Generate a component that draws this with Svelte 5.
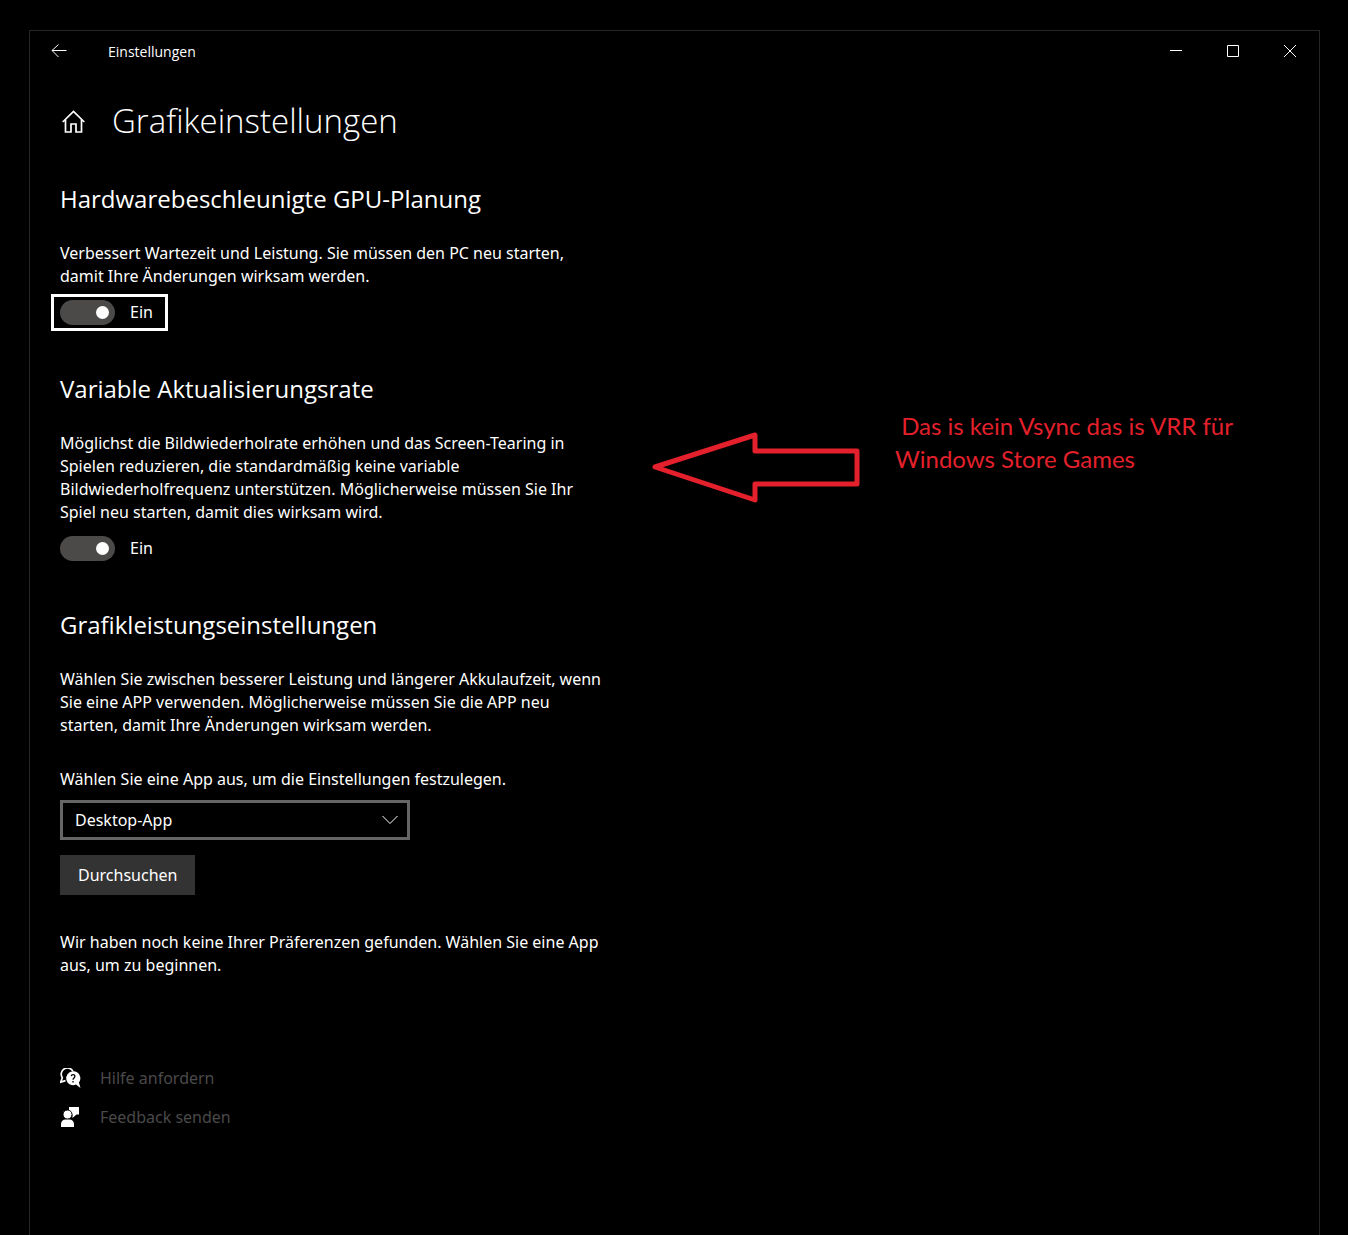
<script lang="ts">
	let gpuScheduling = $state(true);
	let variableRefresh = $state(true);
	let appType = $state('desktop');
</script>

<div class="desktop">
	<div class="window">
		<header class="titlebar">
			<button class="back" aria-label="Zurück">
				<svg viewBox="0 0 16 14" width="16" height="14">
					<path d="M15.500 6.500H1M7.500 .5L1 6.500l6.500 6.500" />
				</svg>
			</button>
			<span class="app-name">Einstellungen</span>
			<div class="controls">
				<button aria-label="Minimieren">
					<svg viewBox="0 0 14 14" width="14" height="14"><path d="M1 6.500h12" /></svg>
				</button>
				<button aria-label="Maximieren">
					<svg viewBox="0 0 14 14" width="14" height="14"><path d="M1.500 1.500h11v11h-11z" /></svg>
				</button>
				<button aria-label="Schließen">
					<svg viewBox="0 0 14 14" width="14" height="14"><path d="M1 1l12 12M13 1L1 13" /></svg>
				</button>
			</div>
		</header>

		<main>
			<div class="page-head">
				<button class="home" aria-label="Startseite">
					<svg viewBox="0 0 24 24" width="24" height="24">
						<path d="M.7 13L11.500 2.500 22.300 13M3.500 10.500V23h5.500v-8h5v8h5.500V10.500" />
					</svg>
				</button>
				<h1>Grafikeinstellungen</h1>
			</div>

			<section>
				<h2>Hardwarebeschleunigte GPU-Planung</h2>
				<p>
					Verbessert Wartezeit und Leistung. Sie müssen den PC neu starten,<br />
					damit Ihre Änderungen wirksam werden.
				</p>
				<label class="toggle focused">
					<input type="checkbox" role="switch" bind:checked={gpuScheduling} />
					<span>{gpuScheduling ? 'Ein' : 'Aus'}</span>
				</label>
			</section>

			<section>
				<h2>Variable Aktualisierungsrate</h2>
				<p>
					Möglichst die Bildwiederholrate erhöhen und das Screen-Tearing in<br />
					Spielen reduzieren, die standardmäßig keine variable<br />
					Bildwiederholfrequenz unterstützen. Möglicherweise müssen Sie Ihr<br />
					Spiel neu starten, damit dies wirksam wird.
				</p>
				<label class="toggle">
					<input type="checkbox" role="switch" bind:checked={variableRefresh} />
					<span>{variableRefresh ? 'Ein' : 'Aus'}</span>
				</label>
			</section>

			<section>
				<h2>Grafikleistungseinstellungen</h2>
				<p>
					Wählen Sie zwischen besserer Leistung und längerer Akkulaufzeit, wenn<br />
					Sie eine APP verwenden. Möglicherweise müssen Sie die APP neu<br />
					starten, damit Ihre Änderungen wirksam werden.
				</p>
				<label class="field-label" for="app-type">
					Wählen Sie eine App aus, um die Einstellungen festzulegen.
				</label>
				<div class="select">
					<select id="app-type" bind:value={appType}>
						<option value="desktop">Desktop-App</option>
						<option value="store">Microsoft Store-App</option>
					</select>
					<svg viewBox="0 0 16 10" width="16" height="10"><path d="M.5 1L8 8.500 15.500 1" /></svg>
				</div>
				<button class="browse">Durchsuchen</button>
				<p>
					Wir haben noch keine Ihrer Präferenzen gefunden. Wählen Sie eine App<br />
					aus, um zu beginnen.
				</p>
			</section>

			<nav>
				<a href="#hilfe">
					<svg viewBox="0 0 22 22" width="22" height="22">
						<path class="line" d="M13 3.500A6.200 6.200 0 1 0 2.300 9.700L.8 14l4.700-1.400" />
						<path
							class="solid"
							d="M13 3.200a7 7 0 1 0 3 13.400l4.500 3.400-1.600-5.600A7 7 0 0 0 13 3.200z"
						/>
						<path class="cut" d="M11.200 8.200c.3-2.200 3.800-2.100 3.700.1 0 1.600-1.900 1.700-1.900 3.500M13 13v1.500" />
					</svg>
					Hilfe anfordern
				</a>
				<a href="#feedback">
					<svg viewBox="0 0 22 22" width="22" height="22">
						<path class="solid" d="M9 0H19v7.500h-2.500L12.500 11V7.500H9z" />
						<circle class="head" cx="7.500" cy="7.500" r="4.500" />
						<path class="solid" d="M1 20v-3A4.500 4.500 0 0 1 5.500 12.500h4a4.500 4.500 0 0 1 4.500 4.500V20z" />
					</svg>
					Feedback senden
				</a>
			</nav>
		</main>

		<aside>
			<svg viewBox="0 0 208 72" width="208" height="72">
				<path d="M3 35L103 3v16h102v33H103v16z" />
			</svg>
			<div class="note">{' Das is kein Vsync das is VRR für\nWindows Store Games'}</div>
		</aside>
	</div>
</div>

<style>
	:global(body) {
		background: #000;
	}

	.desktop {
		box-sizing: border-box;
		min-height: 100vh;
		padding: 30px 28px 0 29px;
		display: flex;
		flex-direction: column;
		color: #fff;
		font-family: 'Noto Sans', 'Open Sans', sans-serif;
		font-size: 16px;
		line-height: 23px;
	}

	.window {
		flex: 1;
		position: relative;
		border: 1px solid #262626;
		border-bottom: none;
	}

	svg {
		display: block;
		fill: none;
		stroke: #fff;
		flex-shrink: 0;
	}

	button {
		padding: 0;
		border: none;
		background: none;
		color: inherit;
		font: inherit;
	}

	.titlebar {
		display: flex;
		align-items: center;
		height: 40px;
		padding-right: 1px;
	}

	.back,
	.controls button {
		display: flex;
		align-items: center;
		justify-content: center;
		width: 57px;
		height: 40px;
	}

	.app-name {
		margin-left: 21px;
		font-family: 'Open Sans', sans-serif;
		font-size: 14px;
	}

	.controls {
		display: flex;
		margin-left: auto;
	}

	main {
		padding: 24px 30px 40px;
	}

	.page-head {
		display: flex;
		align-items: center;
		gap: 26px;
		height: 52px;
		margin-bottom: 35px;
	}

	.home svg {
		margin-left: 2px;
		stroke-width: 1.7;
	}

	h1,
	h2 {
		font-family: 'Open Sans', sans-serif;
	}

	h1 {
		margin: 0;
		font-size: 33px;
		font-weight: 300;
		line-height: 52px;
	}

	section {
		margin-bottom: 47px;
	}

	h2 {
		margin: 0 0 26px;
		font-size: 24px;
		font-weight: 400;
		line-height: 34px;
	}

	p {
		margin: 0 0 12px;
		white-space: nowrap;
	}

	.toggle {
		display: flex;
		align-items: center;
		gap: 15px;
		width: max-content;
	}

	.toggle.focused {
		margin: -6px -9px;
		padding: 3px 12px 3px 6px;
		border: 3px solid #fff;
	}

	.toggle input {
		appearance: none;
		display: flex;
		align-items: center;
		box-sizing: border-box;
		width: 55px;
		height: 25px;
		margin: 0;
		padding: 0 6px;
		border-radius: 13px;
		background: #4c4a48;
	}

	.toggle input::before {
		content: '';
		width: 13px;
		height: 13px;
		border-radius: 50%;
		background: #fff;
	}

	.toggle input:checked::before {
		margin-left: auto;
	}

	.field-label {
		display: block;
		margin: 31px 0 9px;
	}

	.select {
		position: relative;
		width: 350px;
		max-width: 100%;
	}

	.select select {
		appearance: none;
		display: block;
		box-sizing: border-box;
		width: 100%;
		height: 40px;
		padding: 0 40px 0 12px;
		border: 3px solid #666;
		border-radius: 0;
		background: #000;
		color: #fff;
		font: inherit;
	}

	.select svg {
		position: absolute;
		top: 15px;
		right: 12px;
		pointer-events: none;
	}

	.browse {
		display: block;
		height: 40px;
		margin: 15px 0 36px;
		padding: 0 18px;
		background: #333;
	}

	nav {
		margin-top: 82px;
	}

	nav a {
		display: flex;
		align-items: center;
		gap: 18px;
		height: 39px;
		color: #4a4a4a;
		text-decoration: none;
	}

	.line {
		stroke-width: 1.7;
	}

	.solid {
		fill: #fff;
		stroke: none;
	}

	.cut {
		stroke: #000;
		stroke-width: 1.3;
	}

	.head {
		fill: #fff;
		stroke: #000;
	}

	aside {
		position: absolute;
		top: 378px;
		left: 622px;
		display: flex;
		gap: 35px;
	}

	aside svg {
		margin-top: 23px;
		stroke: #e3202b;
		stroke-width: 5;
		stroke-linejoin: round;
	}

	.note {
		color: #e3202b;
		font-family: Lato, sans-serif;
		font-size: 24px;
		line-height: 33px;
		white-space: pre;
	}
</style>
